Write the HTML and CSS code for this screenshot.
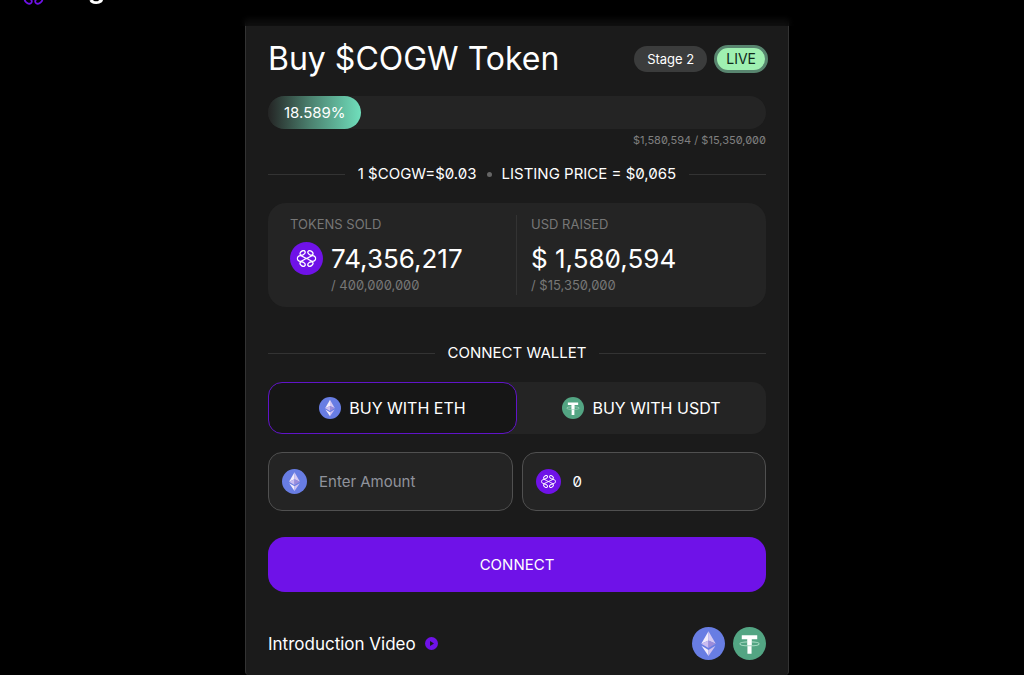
FILE: index.html
```
<!DOCTYPE html>
<html lang="en">
<head>
	<meta charset="UTF-8">
	<meta name="viewport" content="width=device-width, initial-scale=1">
	<title>Buy $COGW Token</title>
	<link rel="stylesheet" href="styles.css">
</head>
<body>
	<!-- shared icons -->
	<svg class="sprite" aria-hidden="true">
		<symbol id="mark" viewBox="0 0 20 17">
			<g fill="none" stroke="currentColor" stroke-width="1.3" stroke-linecap="round" stroke-linejoin="round">
				<path d="M10 8.500C7.500 7.600 6.500 6.500 4.200 5.700C2.200 5.500 .8 7 .8 8.500S2.200 11.500 4.200 11.300C6.500 10.500 7.500 9.400 10 8.500C12.500 7.600 13.500 6.500 15.800 5.700C17.800 5.500 19.200 7 19.200 8.500S17.800 11.500 15.800 11.300C13.500 10.500 12.500 9.400 10 8.500Z"/>
				<ellipse cx="6.100" cy="2.900" rx="2.800" ry="1.900" transform="rotate(-35 6.100 2.900)"/>
				<ellipse cx="13.900" cy="2.900" rx="2.800" ry="1.900" transform="rotate(35 13.900 2.900)"/>
				<ellipse cx="6.100" cy="14.100" rx="2.800" ry="1.900" transform="rotate(35 6.100 14.100)"/>
				<ellipse cx="13.900" cy="14.100" rx="2.800" ry="1.900" transform="rotate(-35 13.900 14.100)"/>
			</g>
		</symbol>
		<symbol id="cogw" viewBox="0 0 33 33">
			<circle cx="16.500" cy="16.500" r="16.500" fill="#6f12e8"/>
			<use href="#mark" x="6.500" y="8" width="20" height="17"/>
		</symbol>
		<symbol id="eth" viewBox="0 0 32 32">
			<circle cx="16" cy="16" r="16" fill="#687de3"/>
			<path d="M16 4L9 16.200L16 13Z" fill="#f3edfb"/>
			<path d="M16 4L23 16.200L16 13Z" fill="#d5c8f2"/>
			<path d="M9 16.200L16 13V20.400Z" fill="#cbbdf0"/>
			<path d="M23 16.200L16 13V20.400Z" fill="#9c8cda"/>
			<path d="M9.200 18.200L16 22.200V28Z" fill="#f3edfb"/>
			<path d="M22.800 18.200L16 22.200V28Z" fill="#cfc0f0"/>
		</symbol>
		<symbol id="usdt" viewBox="0 0 32 32">
			<circle cx="16" cy="16" r="16" fill="#53a583"/>
			<path d="M8.500 8H23.500V11.800H18V26H14V11.800H8.500Z" fill="#fff"/>
			<ellipse cx="16" cy="16.200" rx="9.300" ry="2" fill="none" stroke="#a9dbc4" stroke-width="1"/>
			<path d="M14 11.800H18V17.500H14Z" fill="#fff"/>
		</symbol>
	</svg>

	<header class="header">
		<a class="brand" href="#">
			<svg class="brand-mark"><use href="#mark"/></svg>
			<span>Cog</span>
		</a>
	</header>

	<main class="card">
		<div class="top">
			<h1>Buy $COGW Token</h1>
			<span class="stage">Stage 2</span>
			<span class="live">LIVE</span>
		</div>

		<div class="progress">
			<div class="progress-fill" style="width: 18.589%">18.589%</div>
		</div>
		<p class="goal">$1,580,594 / $15,350,000</p>

		<div class="rule price">
			<span>1 $COGW=$0.03</span>
			<i class="dot"></i>
			<span>LISTING PRICE = $0,065</span>
		</div>

		<section class="stats">
			<div class="stat">
				<h2>TOKENS SOLD</h2>
				<div class="stat-row">
					<svg class="stat-icon"><use href="#cogw"/></svg>
					<div>
						<strong>74,356,217</strong>
						<small>/ 400,000,000</small>
					</div>
				</div>
			</div>
			<div class="stat">
				<h2>USD RAISED</h2>
				<strong>$ 1,580,594</strong>
				<small>/ $15,350,000</small>
			</div>
		</section>

		<div class="rule wallet"><span>CONNECT WALLET</span></div>

		<div class="tabs">
			<button type="button" class="tab active"><svg><use href="#eth"/></svg>BUY WITH ETH</button>
			<button type="button" class="tab"><svg><use href="#usdt"/></svg>BUY WITH USDT</button>
		</div>

		<div class="fields">
			<label class="field">
				<svg><use href="#eth"/></svg>
				<input type="text" placeholder="Enter Amount" aria-label="Amount in ETH">
			</label>
			<label class="field">
				<svg><use href="#cogw"/></svg>
				<input type="text" value="0" aria-label="Amount in COGW">
			</label>
		</div>

		<button type="button" class="connect">CONNECT</button>

		<div class="bottom">
			<a class="video" href="#">
				Introduction Video
				<svg viewBox="0 0 13 13"><circle cx="6.500" cy="6.500" r="6.500" fill="#6f12e8"/><path d="M5 4L9 6.500L5 9Z" fill="#1b1b1b"/></svg>
			</a>
			<svg class="coin"><use href="#eth"/></svg>
			<svg class="coin"><use href="#usdt"/></svg>
		</div>
	</main>
</body>
</html>
```
FILE: styles.css
```
* { box-sizing: border-box; margin: 0; padding: 0; }

body {
	min-height: 100vh;
	padding: 16px 0 0 10px;
	background: #000;
	color: #fff;
	font: 16px/20px Inter, "Liberation Sans", sans-serif;
	font-feature-settings: "zero";
	display: flex;
	flex-direction: column;
	align-items: center;
}

svg { display: block; flex: none; color: #fff; }
a { color: inherit; text-decoration: none; }
button, input { font: inherit; font-feature-settings: inherit; color: inherit; border: 0; background: none; }
.sprite { position: absolute; width: 0; height: 0; }

/* header, slides over the card */
.header {
	position: fixed;
	top: 0;
	left: 0;
	right: 0;
	height: 26px;
	padding-left: 20px;
	overflow: hidden;
	z-index: 2;
	background: linear-gradient(#000 50%, rgba(0, 0, 0, .4));
	backdrop-filter: blur(3px);
	display: flex;
	align-items: flex-start;
}
.brand { display: flex; align-items: flex-end; gap: 3px; margin-top: -26px; font-size: 28px; line-height: 28px; font-weight: 600; }
.brand-mark { width: 27px; height: 30px; margin-bottom: -6px; color: #6f12e8; }

.card {
	width: 100%;
	max-width: 544px;
	flex: 1;
	padding: 24px 22px 14px;
	background: #1b1b1b;
	border: 1px solid #333;
	border-bottom: 0;
	border-radius: 4px;
}

.top { display: flex; align-items: center; height: 36px; }
.top h1 { flex: 1; font-size: 32px; line-height: 36px; font-weight: 400; }
.stage { padding: 3px 13px; border-radius: 13px; background: #3b3c3c; font-size: 13px; }
.live { margin: 0 -2px 0 7px; padding: 1px 9px; border: 3px solid #58856f; border-radius: 14px; background: #9ff0b1; color: #10281a; font-size: 14px; }

.progress { margin-top: 19px; border-radius: 17px; background: #242424; }
.progress-fill {
	padding-left: 16px;
	border-radius: 17px;
	background: linear-gradient(90deg, #242424, #4b806e 45%, #70dfbc);
	font-size: 15px;
	line-height: 33px;
}
.goal { margin-top: 3px; text-align: right; font-size: 11px; line-height: 16px; color: #808080; }

.rule { display: flex; align-items: center; gap: 10px; }
.rule::before, .rule::after { content: ""; flex: 1; height: 1px; background: #333; }
.rule::before { margin-right: 3px; }
.rule::after { margin-left: 3px; }
.dot { width: 5px; height: 5px; border-radius: 50%; background: #666; }
.price { margin-top: 16px; font-size: 15px; }
.wallet { margin-top: 36px; font-size: 15px; }

.stats { display: grid; grid-template-columns: 1fr 1fr; margin-top: 19px; padding: 12px 0; border-radius: 18px; background: #242424; }
.stat { height: 80px; padding-left: 14px; }
.stat:first-child { padding-left: 22px; border-right: 1px solid #333; }
.stat h2 { font-size: 13px; line-height: 18px; font-weight: 400; color: #777; }
.stat-row { display: flex; gap: 8px; }
.stat-icon { width: 33px; height: 33px; margin-top: 9px; }
.stat strong { display: block; margin-top: 10px; font-size: 26px; line-height: 32px; font-weight: 400; }
.stat small { display: block; font-size: 13px; line-height: 20px; color: #777; }

.tabs { display: flex; margin-top: 19px; border-radius: 14px; background: #242424; }
.tab { flex: 1; height: 52px; display: flex; align-items: center; justify-content: center; gap: 8px; border: 1px solid transparent; border-radius: 14px; }
.tab.active { background: #161616; border-color: #6014c8; }
.tab svg { width: 22px; height: 22px; }

.fields { display: flex; gap: 9px; margin-top: 18px; }
.field { flex: 1; height: 59px; display: flex; align-items: center; gap: 12px; padding-left: 13px; border: 1px solid #505050; border-radius: 14px; background: #242424; }
.field svg { width: 25px; height: 25px; }
.field input { width: 100%; min-width: 0; font-size: 15px; }
.field input::placeholder { color: #90939c; }

.connect { width: 100%; height: 55px; margin-top: 26px; border-radius: 17px; background: #6f12e8; font-size: 15px; }

.bottom { display: flex; align-items: center; gap: 8px; margin-top: 35px; }
.video { flex: 1; display: flex; align-items: center; gap: 9px; font-size: 17px; }
.video svg { width: 13px; height: 13px; }
.coin { width: 33px; height: 33px; }
```
